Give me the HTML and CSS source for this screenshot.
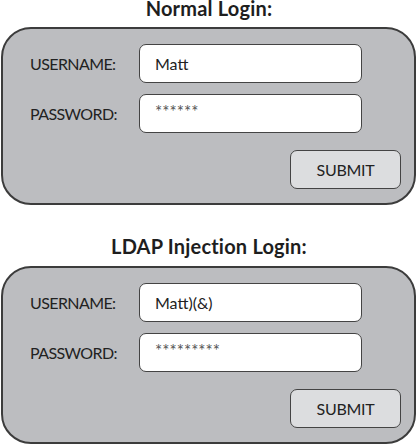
FILE: index.html
```html
<!DOCTYPE html>
<html lang="en">
<head>
  <meta charset="UTF-8" />
  <meta name="viewport" content="width=device-width, initial-scale=1.0" />
  <title>Login Examples</title>
  <link rel="stylesheet" href="styles.css">
</head>
<body>
  <h2 class="title">Normal Login:</h2>
  <form class="panel">
    <label class="field-label" for="user1">USERNAME:</label>
    <input class="field" id="user1" type="text" value="Matt">
    <label class="field-label" for="pass1">PASSWORD:</label>
    <input class="field secret" id="pass1" type="text" value="******">
    <div class="actions">
      <button type="button" class="submit">SUBMIT</button>
    </div>
  </form>

  <h2 class="title second">LDAP Injection Login:</h2>
  <form class="panel">
    <label class="field-label" for="user2">USERNAME:</label>
    <input class="field" id="user2" type="text" value="Matt)(&amp;)">
    <label class="field-label" for="pass2">PASSWORD:</label>
    <input class="field secret" id="pass2" type="text" value="*********">
    <div class="actions">
      <button type="button" class="submit">SUBMIT</button>
    </div>
  </form>
</body>
</html>
```

FILE: styles.css
```css
body {
  margin: 0;
  font-family: Lato, "Open Sans", sans-serif;
  color: #1e1e1e;
  background: #fff;
}
.title {
  margin: 0 0 11px;
  font-size: 20px;
  line-height: 16px;
  font-weight: 700;
  text-align: center;
  letter-spacing: 0.2px;
}
.title.second {
  margin-top: 33px;
  margin-bottom: 12px;
}
.panel {
  margin: 0 2px 0 1px;
  height: 178px;
  box-sizing: border-box;
  border: 2px solid #3c3c3c;
  border-radius: 30px;
  background: #bcbdc0;
  padding: 15px 13px 0 27px;
  display: grid;
  grid-template-columns: 109px 223px;
  grid-template-rows: 39px 39px 39px;
  row-gap: 11px;
  align-items: center;
  align-content: start;
}
.field-label {
  font-size: 16px;
  letter-spacing: -0.6px;
  color: #222;
}
.field {
  box-sizing: border-box;
  width: 223px;
  height: 39px;
  margin: 0;
  border: 1.5px solid #444;
  border-radius: 7px;
  background: #fff;
  padding: 0 0 0 15px;
  font-family: inherit;
  font-size: 16px;
  color: #222;
  outline: none;
}
.secret {
  color: #555;
  font-size: 17px;
  padding-bottom: 4px;
}
.actions {
  grid-column: 1 / 3;
  display: flex;
  justify-content: flex-end;
  margin-right: -39px;
  margin-top: 11px;
}
.submit {
  width: 111px;
  height: 39px;
  border: 1.5px solid #444;
  border-radius: 7px;
  background: #dcdddf;
  font-family: inherit;
  font-size: 16px;
  letter-spacing: -0.3px;
  color: #222;
  padding: 0;
}
```
